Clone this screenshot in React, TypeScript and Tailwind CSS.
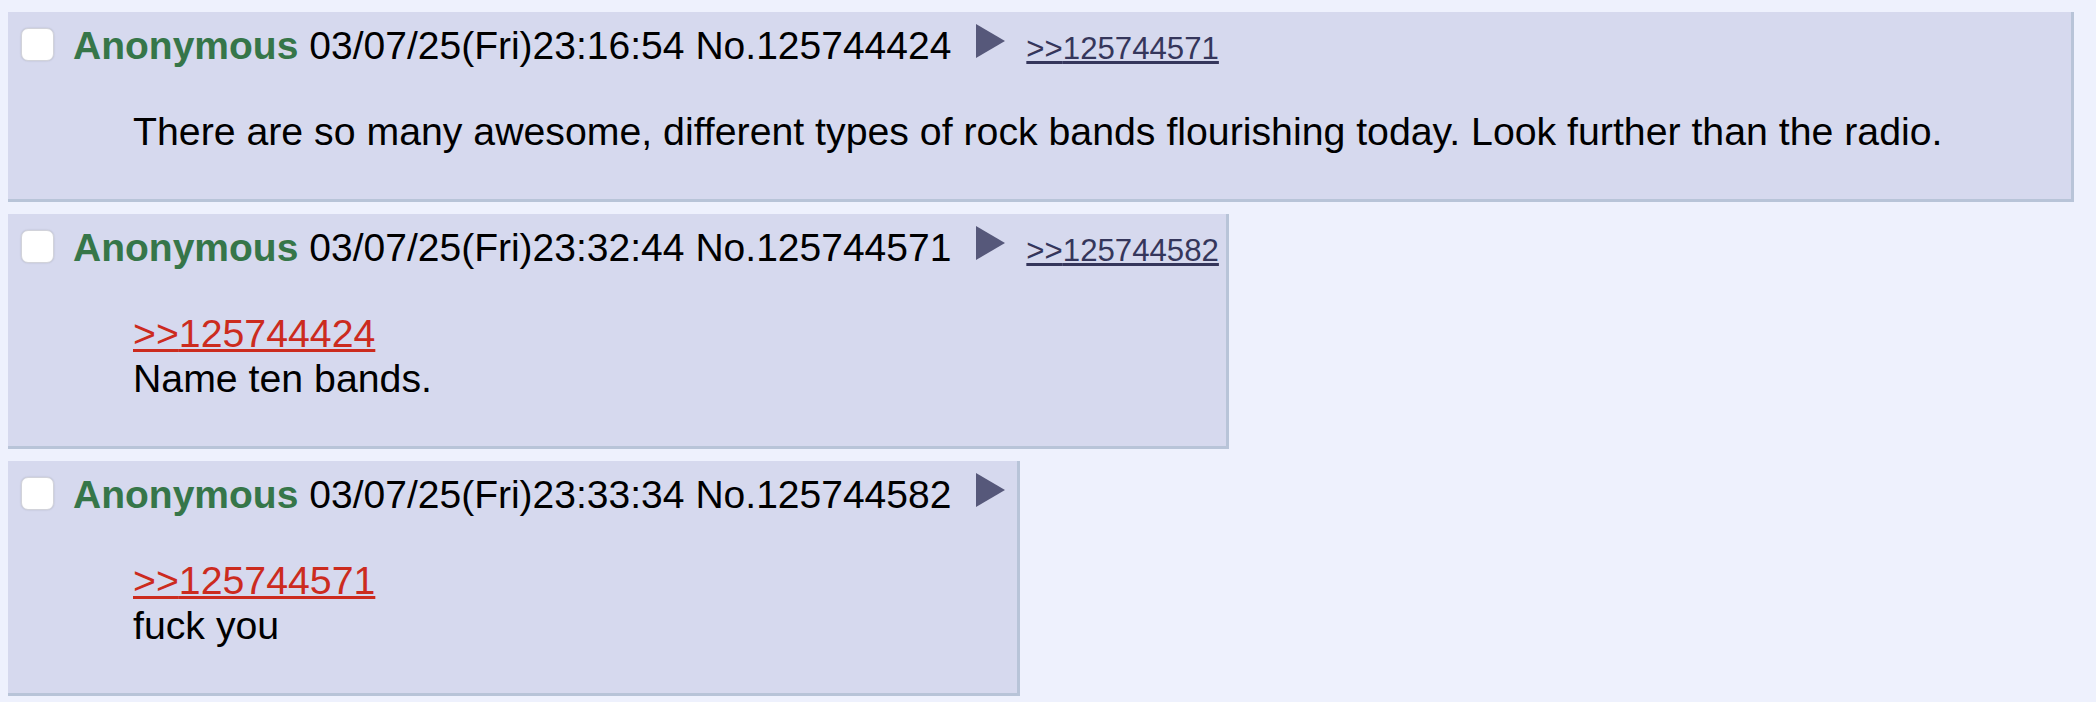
import React from 'react';

type Post = {
  no: string;
  date: string;
  backlinks: string[];
  quote?: string;
  text: string;
};

const posts: Post[] = [
  {
    no: '125744424',
    date: '03/07/25(Fri)23:16:54',
    backlinks: ['125744571'],
    text: 'There are so many awesome, different types of rock bands flourishing today. Look further than the radio.',
  },
  {
    no: '125744571',
    date: '03/07/25(Fri)23:32:44',
    backlinks: ['125744582'],
    quote: '125744424',
    text: 'Name ten bands.',
  },
  {
    no: '125744582',
    date: '03/07/25(Fri)23:33:34',
    backlinks: [],
    quote: '125744571',
    text: 'fuck you',
  },
];

const MenuArrow: React.FC = () => (
  <svg width="29" height="34" viewBox="0 0 29 34" className="mt-px ml-[25px] mr-[6px] shrink-0">
    <polygon points="0,0 29,17 0,34" fill="#56587a" />
  </svg>
);

const Reply: React.FC<{ post: Post }> = ({ post }) => (
  <div className="w-fit bg-[#d6d9ee] border-r-[3px] border-b-[3px] border-[#b8c4d8] p-[6px]">
    {/* post info row */}
    <div className="flex items-baseline h-[52px] pt-[5px] whitespace-nowrap text-[39px]">
      <input
        type="checkbox"
        className="self-start appearance-none mt-[5px] ml-[7px] mr-[19px] w-[33px] h-[33px] rounded-[7px] bg-white border border-[#d2d3da] shadow-[0_0_2px_rgba(0,0,0,0.15)] shrink-0"
      />
      <span className="font-bold text-[#367649]">Anonymous</span>
      <span className="ml-[11px]">{post.date}</span>
      <span className="ml-[11px]">No.{post.no}</span>
      <div className="self-start">
        <MenuArrow />
      </div>
      {post.backlinks.map((b) => (
        <a
          key={b}
          href={`#p${b}`}
          className="ml-[15px] mr-px text-[31.2px] leading-[36px] text-[#35365b] underline"
        >
          &gt;&gt;{b}
        </a>
      ))}
    </div>

    <blockquote className="my-[39px] ml-[119px] mr-[123px] whitespace-nowrap">
      {post.quote && (
        <a href={`#p${post.quote}`} className="block w-fit text-[#cc2b1e] underline">
          &gt;&gt;{post.quote}
        </a>
      )}
      <div>{post.text}</div>
    </blockquote>
  </div>
);

export default function App() {
  return (
    <div className="min-h-screen bg-[#eef1fd] pt-3 pl-2 flex flex-col gap-3 font-['Liberation_Sans',Arial,sans-serif] text-[39.25px] leading-[45px] text-black">
      {posts.map((p) => (
        <Reply key={p.no} post={p} />
      ))}
    </div>
  );
}
